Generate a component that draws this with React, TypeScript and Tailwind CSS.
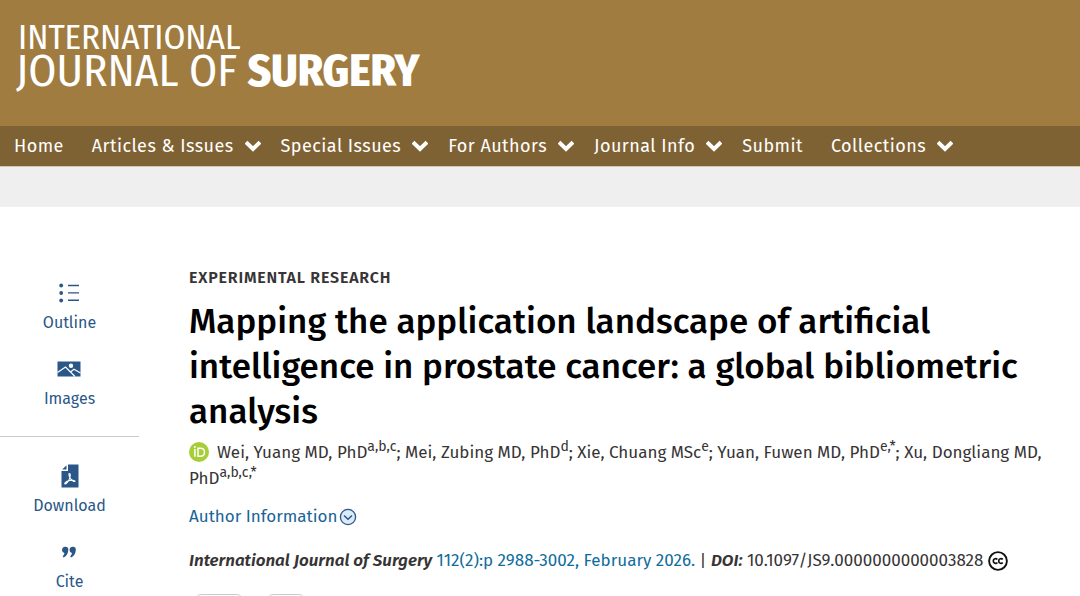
import type { ReactNode } from "react";

type NavItem = { label: string; menu: boolean };

const navItems: NavItem[] = [
  { label: "Home", menu: false },
  { label: "Articles & Issues", menu: true },
  { label: "Special Issues", menu: true },
  { label: "For Authors", menu: true },
  { label: "Journal Info", menu: true },
  { label: "Submit", menu: false },
  { label: "Collections", menu: true },
];

function Chevron() {
  return (
    <svg viewBox="0 0 16 12" className="h-3 w-4" aria-hidden="true">
      <path d="M1 2.2 L8 9 L15 2.2" fill="none" stroke="currentColor" strokeWidth="4" />
    </svg>
  );
}

function OutlineIcon() {
  return (
    <svg viewBox="0 0 20 20" className="h-5 w-5" aria-hidden="true">
      <g fill="currentColor">
        <circle cx="2.2" cy="2.5" r="1.9" />
        <circle cx="2.2" cy="10" r="1.9" />
        <circle cx="2.2" cy="17.5" r="1.9" />
        <path d="M9 1.8h11v1.4H9zM9 9.2h11v1.4H9zM9 16.6h11v1.4H9z" />
      </g>
    </svg>
  );
}

function ImagesIcon() {
  return (
    <svg viewBox="0 0 24 16" className="h-4 w-6" aria-hidden="true">
      <path d="M.5.5h23v15H.5z" fill="currentColor" />
      <circle cx="14" cy="4.8" r="2.2" fill="#fff" />
      <path d="M.5 11.5 L8.5 6 L18 15.5 M13.5 11 L17 8.3 L23.5 12" fill="none" stroke="#fff" strokeWidth="1.2" />
    </svg>
  );
}

function PdfIcon() {
  return (
    <svg viewBox="0 0 18 24" className="h-6 w-[18px]" aria-hidden="true">
      <path d="M7 .5h10.5v23H.5V7H7z" fill="currentColor" />
      <path d="M5.5 1.2V5.5H1.2z" fill="currentColor" />
      <path
        d="M8.2 9.5c1.4-.4 1.2 2.4.6 4.3C8 16.5 5.6 19.8 4.2 20c-1.3-.3.4-2.3 3.3-3.2 3.2-.9 6.3-.8 6.5.4-.4 1.1-3.2-.6-4.6-2.6-1-1.5-2-4.5-1.2-5.1z"
        fill="none"
        stroke="#fff"
        strokeWidth="1.1"
      />
    </svg>
  );
}

function QuoteIcon() {
  return (
    <svg viewBox="0 0 14 12" className="h-3 w-[14px]" aria-hidden="true">
      <path
        d="M3.3.8a2.9 2.9 0 0 1 3 3C6.3 7.2 4.5 10.3 1.6 11.4L.6 10.2C1.8 9.3 2.3 8.3 2.4 6.9A3.1 3.1 0 0 1 3.3.8zM10.8.8a2.9 2.9 0 0 1 3 3c0 3.4-1.8 6.5-4.7 7.6l-1-1.2c1.2-.9 1.7-1.9 1.8-3.3A3.1 3.1 0 0 1 10.8.8z"
        fill="currentColor"
      />
    </svg>
  );
}

function OrcidIcon() {
  return (
    <svg viewBox="0 0 20 20" className="mr-2 inline-block h-5 w-5 align-[-4px]" role="img" aria-label="ORCID">
      <circle cx="10" cy="10" r="10" fill="#a6ce39" />
      <circle cx="5.9" cy="4.9" r="1" fill="#fff" />
      <path d="M5.9 7v7.8" stroke="#fff" strokeWidth="1.5" />
      <path d="M9 6.2h2.3c2.6 0 4.2 1.7 4.2 4s-1.6 4-4.2 4H9z" fill="none" stroke="#fff" strokeWidth="1.5" />
    </svg>
  );
}

function ExpandIcon() {
  return (
    <svg viewBox="0 0 18 18" className="h-[18px] w-[18px]" aria-hidden="true">
      <circle cx="9" cy="9" r="7.6" fill="#dcebf8" stroke="#2a5788" strokeWidth="1.3" />
      <path d="M5 7.5 L9 11.2 L13 7.5" fill="none" stroke="#2a5788" strokeWidth="1.5" />
    </svg>
  );
}

function CreativeCommonsIcon() {
  return (
    <svg viewBox="0 0 20 20" className="inline-block h-5 w-5 align-[-5px]" role="img" aria-label="Creative Commons">
      <circle cx="10" cy="10" r="8.9" fill="none" stroke="#111" strokeWidth="1.9" />
      <path
        d="M9.3 8.6C8.2 7 5.3 7.5 5.3 10s2.9 3 4 1.4M14.7 8.6c-1.1-1.6-4-1.1-4 1.4s2.9 3 4 1.4"
        fill="none"
        stroke="#111"
        strokeWidth="1.7"
      />
    </svg>
  );
}

function Tool({ icon, label }: { icon: ReactNode; label: string }) {
  return (
    <button type="button" className="flex flex-col items-center text-[#2a5788]">
      <span className="flex h-6 items-center">{icon}</span>
      <span className="mt-1 text-base leading-7">{label}</span>
    </button>
  );
}

function Sup({ children }: { children: ReactNode }) {
  return <sup className="text-sm leading-none">{children}</sup>;
}

export default function App() {
  return (
    <div className="h-screen overflow-hidden bg-white font-['Fira_Sans','Noto_Sans',sans-serif] text-[#373435]">
      <header>
        <div className="h-[126px] bg-[#a07c40] px-4 pt-5 font-['Fira_Sans_Condensed','Fira_Sans','Open_Sans',sans-serif] text-white">
          <a href="#home" className="inline-block">
            <span className="block pl-0.5 text-[35px] leading-[34px] font-normal">INTERNATIONAL</span>
            <span className="block text-[45px] leading-[34px] font-normal">
              JOURNAL OF <b className="font-extrabold">SURGERY</b>
            </span>
          </a>
        </div>
        <nav className="flex h-10 items-center gap-7 bg-[#7f6233] px-[14px] text-lg tracking-wide text-white">
          {navItems.map((item) =>
            item.menu ? (
              <button key={item.label} type="button" className="-mr-2 flex items-center gap-[11px]">
                {item.label}
                <Chevron />
              </button>
            ) : (
              <a key={item.label} href="#nav">
                {item.label}
              </a>
            ),
          )}
        </nav>
        <div className="h-[41px] border-t border-[#d5c7ae] bg-[#efefef]" />
      </header>

      <div className="flex">
        <aside className="w-[139px] shrink-0 pt-[74px]">
          <div className="flex flex-col items-center gap-5 border-b border-[#cccccc] pb-[23px]">
            <Tool icon={<OutlineIcon />} label="Outline" />
            <Tool icon={<ImagesIcon />} label="Images" />
          </div>
          <div className="flex flex-col items-center gap-5 pt-[27px]">
            <Tool icon={<PdfIcon />} label="Download" />
            <Tool icon={<QuoteIcon />} label="Cite" />
          </div>
        </aside>

        <main className="min-w-0 flex-1 pt-[61px] pr-3 pl-[50px]">
          <p className="text-base leading-5 font-semibold tracking-wider">EXPERIMENTAL RESEARCH</p>
          <h1 className="mt-[11px] text-[35px] leading-[45px] font-medium text-black">
            Mapping the application landscape of artificial intelligence in prostate cancer: a global bibliometric
            analysis
          </h1>
          <p className="mt-1.5 text-[17px] leading-[26px]">
            <OrcidIcon />
            Wei, Yuang MD, PhD<Sup>a,b,c</Sup>; Mei, Zubing MD, PhD<Sup>d</Sup>; Xie, Chuang MSc<Sup>e</Sup>; Yuan,
            Fuwen MD, PhD<Sup>e,*</Sup>; Xu, Dongliang MD, PhD<Sup>a,b,c,*</Sup>
          </p>
          <button type="button" className="mt-3 flex items-center gap-0.5 text-[17px] leading-[26px] text-[#1a6496]">
            Author Information
            <ExpandIcon />
          </button>
          <p className="mt-[17px] text-[17px] leading-[28px]">
            <em className="font-semibold">International Journal of Surgery</em>{" "}
            <a href="#issue" className="text-[#0f6d9c]">
              112(2):p 2988-3002, February 2026.
            </a>{" "}
            | <em className="font-semibold">DOI:</em> 10.1097/JS9.0000000000003828 <CreativeCommonsIcon />
          </p>
          <div className="mt-[19px] flex gap-6 pl-1.5">
            <button type="button" aria-label="Share" className="h-7 w-12 rounded-md border border-[#cccccc]" />
            <button type="button" aria-label="Metrics" className="h-7 w-[38px] rounded-md border border-[#cccccc]" />
          </div>
        </main>
      </div>
    </div>
  );
}
